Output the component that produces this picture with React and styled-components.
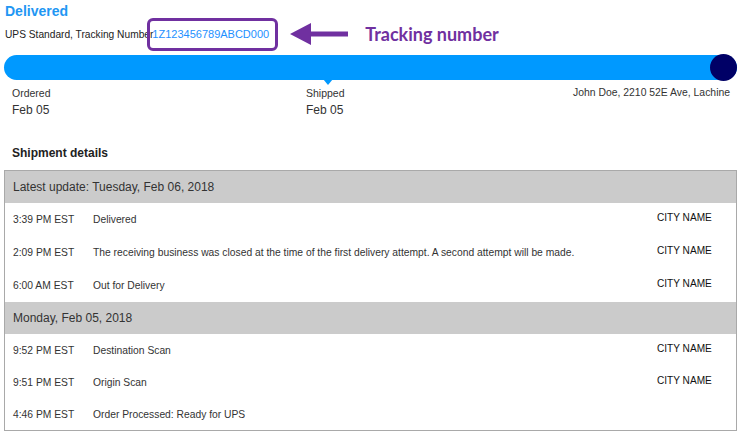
import styled, { createGlobalStyle } from "styled-components";

const GlobalStyle = createGlobalStyle`
  body {
    margin: 0;
    background: #fff;
    font-family: "Liberation Sans", Arial, sans-serif;
    color: #333;
  }
`;

const Page = styled.div`
  width: 748px;
  height: 442px;
  padding: 3px 11px 0 4px;
  box-sizing: border-box;
  overflow: hidden;
`;

const Status = styled.div`
  font-size: 14px;
  font-weight: 700;
  color: #2196f3;
  padding-left: 1px;
  line-height: 17px;
`;

const TrackingRow = styled.div`
  display: flex;
  align-items: center;
  height: 34px;
  margin-top: -3px;
  padding-left: 1px;
`;

const Service = styled.span`
  font-size: 10.2px;
  color: #222;
  white-space: nowrap;
`;

const TrackingBox = styled.div`
  margin-left: -6px;
  height: 33px;
  padding: 0 6px 0 2px;
  box-sizing: border-box;
  border: 3px solid #7030a0;
  border-radius: 6px;
  display: flex;
  align-items: center;
`;

const TrackingNumber = styled.span`
  font-size: 11px;
  color: #1e90ff;
`;

const Arrow = styled.svg`
  margin-left: 12px;
  flex: none;
`;

const Callout = styled.span`
  margin-left: 17px;
  font-family: Lato, "Open Sans", sans-serif;
  font-size: 18px;
  font-weight: 700;
  color: #7030a0;
`;

const Bar = styled.div`
  margin-top: 4px;
  height: 25px;
  border-radius: 13px;
  background: #0099ff;
  display: flex;
  justify-content: flex-end;
  align-items: center;
`;

const EndDot = styled.div`
  width: 27px;
  height: 27px;
  border-radius: 50%;
  background: #000066;
`;

const Milestones = styled.div`
  display: flex;
  padding: 6px 7px 0 8px;
`;

const Milestone = styled.div`
  position: relative;
  width: ${(p) => p.$width || "auto"};
  flex: ${(p) => (p.$grow ? 1 : "none")};

  ${(p) =>
    p.$pointer &&
    `
    &::before {
      content: "";
      position: absolute;
      left: 17px;
      top: -7px;
      border-left: 5px solid transparent;
      border-right: 5px solid transparent;
      border-top: 6px solid #0099ff;
    }
  `}
`;

const MilestoneLabel = styled.div`
  font-size: 10.5px;
  line-height: 14px;
  color: #333;
`;

const MilestoneDate = styled.div`
  font-size: 12px;
  line-height: 16px;
  margin-top: 2px;
  color: #333;
`;

const Address = styled.div`
  font-size: 10.4px;
  line-height: 14px;
  color: #333;
  text-align: right;
`;

const SectionTitle = styled.div`
  margin-top: 28px;
  padding-left: 8px;
  font-size: 12px;
  font-weight: 700;
  color: #222;
  line-height: 15px;
`;

const Table = styled.div`
  margin-top: 9px;
  border: 1px solid #a9a9a9;
`;

const GroupHeader = styled.div`
  height: 32px;
  background: #cbcbcb;
  display: flex;
  align-items: center;
  padding-left: 8px;
  font-size: 12px;
  color: #333;
`;

const Row = styled.div`
  height: ${(p) => p.$h || 33}px;
  display: grid;
  grid-template-columns: 80px 1fr 79px;
  align-items: center;
  padding-left: 8px;
  font-size: 10.3px;
  color: #333;
`;

const Time = styled.span``;
const Desc = styled.span``;
const City = styled.span`
  color: #111;
  font-size: 10.1px;
  margin-bottom: 4px;
`;

const groups = [
  {
    title: "Latest update: Tuesday, Feb 06, 2018",
    h: 33,
    rows: [
      ["3:39 PM EST", "Delivered", "CITY NAME"],
      [
        "2:09 PM EST",
        "The receiving business was closed at the time of the first delivery attempt. A second attempt will be made.",
        "CITY NAME",
      ],
      ["6:00 AM EST", "Out for Delivery", "CITY NAME"],
    ],
  },
  {
    title: "Monday, Feb 05, 2018",
    h: 32,
    rows: [
      ["9:52 PM EST", "Destination Scan", "CITY NAME"],
      ["9:51 PM EST", "Origin Scan", "CITY NAME"],
      ["4:46 PM EST", "Order Processed: Ready for UPS", ""],
    ],
  },
];

const App = () => {
  return (
    <Page>
      <GlobalStyle />
      <Status>Delivered</Status>
      <TrackingRow>
        <Service>UPS Standard, Tracking Number</Service>
        <TrackingBox>
          <TrackingNumber>1Z123456789ABCD000</TrackingNumber>
        </TrackingBox>
        <Arrow width="58" height="24" viewBox="0 0 58 24">
          <polygon points="0,12 21,1 21,9.5 58,9.5 58,14.5 21,14.5 21,23" fill="#7030a0" />
        </Arrow>
        <Callout>Tracking number</Callout>
      </TrackingRow>

      <Bar>
        <EndDot />
      </Bar>
      <Milestones>
        <Milestone $width="294px">
          <MilestoneLabel>Ordered</MilestoneLabel>
          <MilestoneDate>Feb 05</MilestoneDate>
        </Milestone>
        <Milestone $grow $pointer>
          <MilestoneLabel>Shipped</MilestoneLabel>
          <MilestoneDate>Feb 05</MilestoneDate>
        </Milestone>
        <Address>John Doe, 2210 52E Ave, Lachine</Address>
      </Milestones>

      <SectionTitle>Shipment details</SectionTitle>
      <Table>
        {groups.map((g) => (
          <div key={g.title}>
            <GroupHeader>{g.title}</GroupHeader>
            {g.rows.map((r) => (
              <Row key={r[0]} $h={g.h}>
                <Time>{r[0]}</Time>
                <Desc>{r[1]}</Desc>
                <City>{r[2]}</City>
              </Row>
            ))}
          </div>
        ))}
      </Table>
    </Page>
  );
};

export default App;
